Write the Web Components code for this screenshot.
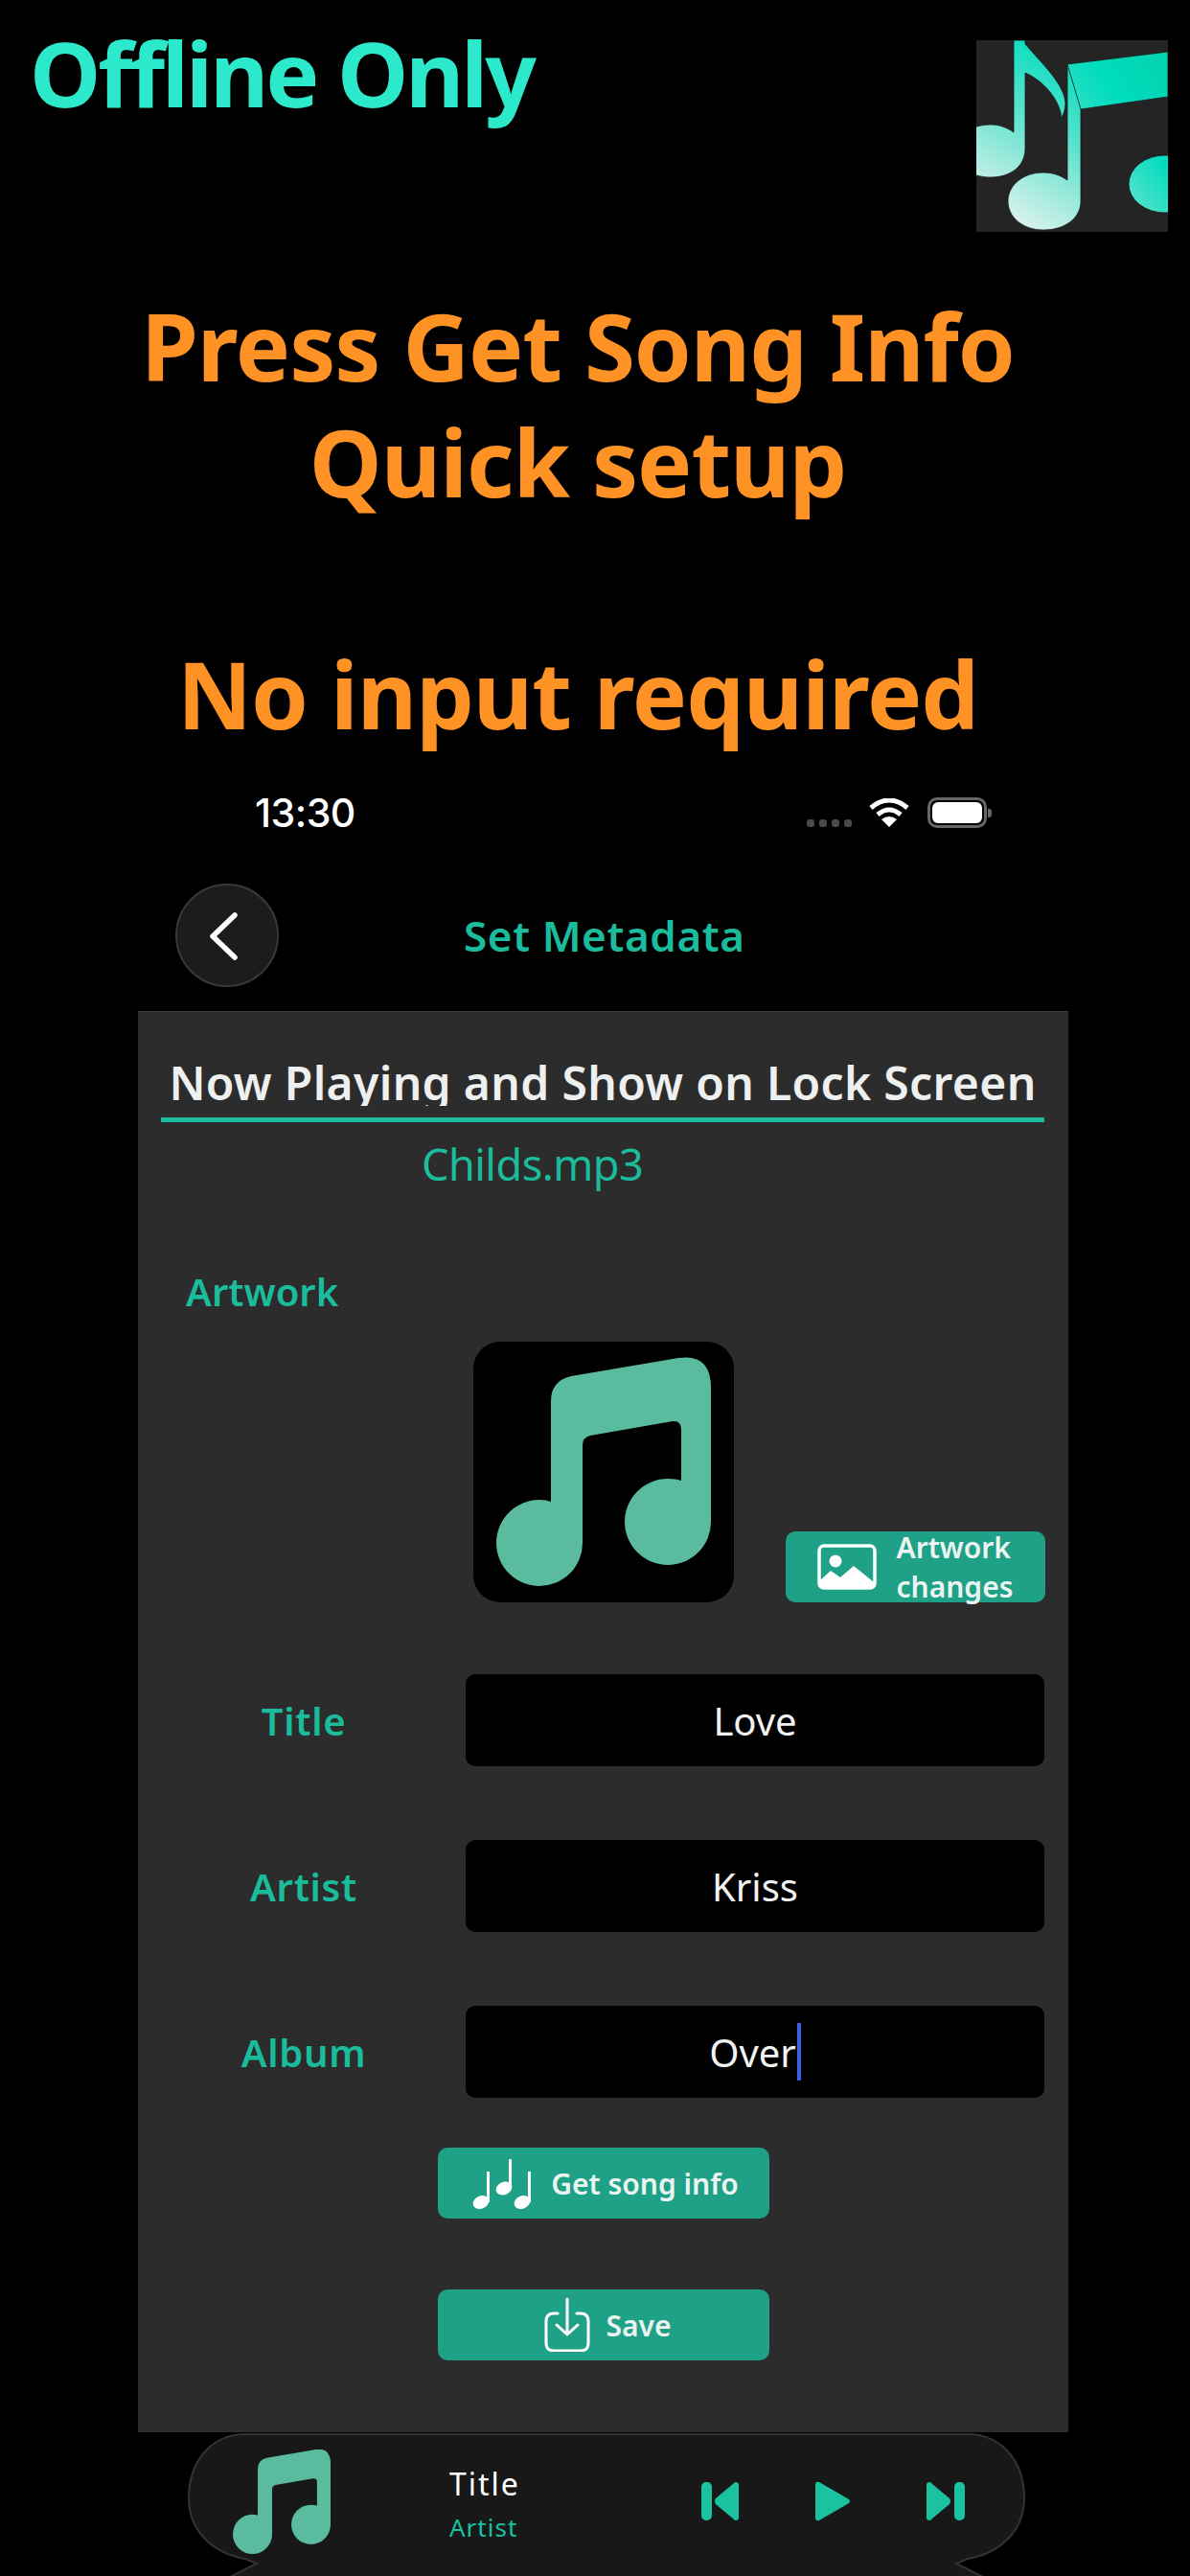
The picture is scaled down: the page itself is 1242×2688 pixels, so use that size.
<!DOCTYPE html>
<html>
<head>
<meta charset="utf-8">
<title>Set Metadata</title>
<style>
html, body { margin: 0; padding: 0; background: #000; }
body { width: 1242px; height: 2688px; overflow: hidden; font-family: "Noto Sans", Lato, sans-serif; }
</style>
</head>
<body>
<promo-header>
  <span slot="badge">Offline Only</span>
  <span>Press Get Song Info</span>
  <span>Quick setup</span>
  <span>&nbsp;</span>
  <span>No input required</span>
</promo-header>
<status-bar time="13:30"></status-bar>
<nav-bar>Set Metadata</nav-bar>
<metadata-panel>
  <span slot="heading">Now Playing and Show on Lock Screen</span>
  <span slot="file">Childs.mp3</span>
  <meta-field label="Title">Love</meta-field>
  <meta-field label="Artist">Kriss</meta-field>
  <meta-field label="Album" caret>Over</meta-field>
</metadata-panel>
<mini-player title-text="Title" artist="Artist"></mini-player>

<script>
const NOTE_PATH = 'M81 167V62Q81 41 102 36L214 17Q248 12 248 48V188A45 45 0 1 1 203 143Q212 143 217 145V92Q217 82 208 83L122 98Q114 100 114 108V210A45 45 0 1 1 69 165Q76 165 81 167Z';

const promoTemplate = document.createElement('template');
promoTemplate.innerHTML = `
<style>
:host { display: block; height: 784px; }
.top { display: flex; justify-content: space-between; align-items: flex-start; height: 300px; padding: 0 23px 0 31px; box-sizing: border-box; }
.badge { font-size: 94px; line-height: 100px; font-weight: 700; color: #2de9cb; margin-top: 26px; letter-spacing: -3px; }
.logo { display: block; width: 200px; height: 200px; margin-top: 42px; background: #242424; }
.lines { display: flex; flex-direction: column; align-items: center; width: 1206px; font-size: 96px; line-height: 121px; font-weight: 700; color: #ff9225; letter-spacing: -1px; }
::slotted(span) { display: block; }
</style>
<div class="top">
  <div class="badge"><slot name="badge"></slot></div>
  <svg class="logo" viewBox="0 0 200 200">
    <defs>
      <linearGradient id="g1" gradientUnits="userSpaceOnUse" x1="40" y1="200" x2="140" y2="40">
        <stop offset="0" stop-color="#e6f3f0"/><stop offset=".55" stop-color="#62e3cd"/><stop offset="1" stop-color="#00dcbe"/>
      </linearGradient>
      <linearGradient id="g2" gradientUnits="userSpaceOnUse" x1="90" y1="80" x2="200" y2="10">
        <stop offset="0" stop-color="#3ce0c6"/><stop offset=".45" stop-color="#00dcbe"/><stop offset="1" stop-color="#03d2ad"/>
      </linearGradient>
      <linearGradient id="g3" gradientUnits="userSpaceOnUse" x1="150" y1="170" x2="200" y2="130">
        <stop offset="0" stop-color="#62e3cd"/><stop offset="1" stop-color="#00dcbe"/>
      </linearGradient>
    </defs>
    <g stroke="#1a1a1a" stroke-width=".8">
      <path fill="url(#g1)" d="M39 0H51V4C70 26 92 46 93 66C93 72 91 77 89 81C87 62 70 42 51 34V113C51 132 35 143 15 143C-8 143 -22 130 -22 115C-22 100 -6 88 15 88C24 88 32 91 39 96Z"/>
      <path fill="url(#g1)" d="M95 25H109V168C109 186 92 198 70 198C49 198 33 185 33 168C33 151 49 138 70 138C80 138 88 141 95 146Z"/>
      <path fill="url(#g2)" d="M95 25L200 12V59L109 72Z"/>
      <ellipse fill="url(#g3)" cx="197" cy="150" rx="38" ry="30"/>
    </g>
  </svg>
</div>
<div class="lines"><slot></slot></div>
`;
class PromoHeader extends HTMLElement {
  constructor() {
    super();
    this.attachShadow({ mode: 'open' });
    this.shadowRoot.appendChild(promoTemplate.content.cloneNode(true));
  }
}
customElements.define('promo-header', PromoHeader);

const statusTemplate = document.createElement('template');
statusTemplate.innerHTML = `
<style>
:host { display: flex; align-items: center; justify-content: space-between; height: 128px; padding: 0 207px 0 266px; box-sizing: border-box; color: #fff; }
.time { font-family: Inter, "Liberation Sans", sans-serif; font-size: 41px; font-weight: 500; letter-spacing: -.5px; }
.icons { display: flex; align-items: center; }
.dots { display: flex; gap: 5px; margin: 22px 18px 0 0; }
.dots i { display: block; width: 8px; height: 8px; border-radius: 3px; background: #4a4a4a; }
.wifi { display: block; width: 42px; height: 30px; margin-right: 19px; }
.battery { width: 62px; height: 32px; border: 3px solid #666; border-radius: 10px; box-sizing: border-box; padding: 2px; position: relative; }
.battery i { display: block; height: 100%; background: #fff; border-radius: 6px; }
.nub { width: 4px; height: 9px; background: #666; border-radius: 0 3px 3px 0; margin-left: 1px; }
</style>
<span class="time"></span>
<div class="icons">
  <div class="dots"><i></i><i></i><i></i><i></i></div>
  <svg class="wifi" viewBox="0 0 42 30" fill="none" stroke="#fff" stroke-width="5">
    <path d="M2 10Q21 -6 40 10"/>
    <path d="M9 17Q21 7 33 17"/>
    <path fill="#fff" stroke="none" d="M21 30L13 22Q21 16 29 22Z"/>
  </svg>
  <div class="battery"><i></i></div>
  <div class="nub"></div>
</div>
`;
class StatusBar extends HTMLElement {
  constructor() {
    super();
    this.attachShadow({ mode: 'open' });
    this.shadowRoot.appendChild(statusTemplate.content.cloneNode(true));
    this.shadowRoot.querySelector('.time').textContent = this.getAttribute('time');
  }
}
customElements.define('status-bar', StatusBar);

const navTemplate = document.createElement('template');
navTemplate.innerHTML = `
<style>
:host { display: flex; align-items: center; gap: 193px; height: 143px; padding: 0 0 15px 183px; box-sizing: border-box; }
.back { display: flex; width: 108px; height: 108px; border-radius: 50%; background: #1c1c1c; border: 2px solid #383838; box-sizing: border-box; }
.back svg { width: 104px; height: 104px; }
.title { font-size: 44px; font-weight: 600; color: #1abc9c; letter-spacing: .6px; }
</style>
<div class="back">
  <svg viewBox="0 0 104 104" fill="none" stroke="#fff" stroke-width="5.5" stroke-linecap="round" stroke-linejoin="round"><path d="M60 31L37 53L60 75"/></svg>
</div>
<div class="title"><slot></slot></div>
`;
class NavBar extends HTMLElement {
  constructor() {
    super();
    this.attachShadow({ mode: 'open' });
    this.shadowRoot.appendChild(navTemplate.content.cloneNode(true));
  }
}
customElements.define('nav-bar', NavBar);

const fieldTemplate = document.createElement('template');
fieldTemplate.innerHTML = `
<style>
:host { display: flex; align-items: center; height: 96px; margin-right: 25px; }
.label { width: 342px; padding-left: 4px; box-sizing: border-box; text-align: center; font-size: 40px; font-weight: 600; color: #1abc9c; letter-spacing: .7px; }
.input { width: 604px; height: 96px; border-radius: 10px; background: #000; color: #f2f2f2; display: flex; align-items: center; justify-content: center; font-size: 40px; }
.caret { display: none; width: 4px; height: 60px; margin-left: 1px; background: #3d5fe0; }
:host([caret]) .caret { display: block; }
</style>
<div class="label"></div>
<div class="input"><slot></slot><span class="caret"></span></div>
`;
class MetaField extends HTMLElement {
  constructor() {
    super();
    this.attachShadow({ mode: 'open' });
    this.shadowRoot.appendChild(fieldTemplate.content.cloneNode(true));
    this.shadowRoot.querySelector('.label').textContent = this.getAttribute('label');
  }
}
customElements.define('meta-field', MetaField);

const buttonTemplate = document.createElement('template');
buttonTemplate.innerHTML = `
<style>
:host { display: flex; align-items: center; justify-content: center; gap: 20px; height: 74px; border-radius: 10px; background: #1fa187; color: #ecf4f1; font-size: 30px; font-weight: 600; box-sizing: border-box; }
::slotted(svg) { display: block; flex: none; }
</style>
<slot></slot>
`;
class ActionButton extends HTMLElement {
  constructor() {
    super();
    this.attachShadow({ mode: 'open' });
    this.shadowRoot.appendChild(buttonTemplate.content.cloneNode(true));
  }
}
customElements.define('action-button', ActionButton);

const panelTemplate = document.createElement('template');
panelTemplate.innerHTML = `
<style>
:host { display: block; width: 971px; height: 1483px; margin-left: 144px; padding-top: 44px; box-sizing: border-box; background: #2c2c2c; border-top: 1px solid #3a3a3a; }
.heading { margin: 0 25px 0 24px; padding-bottom: 12px; border-bottom: 5px solid #1abc9c; }
.heading div { height: 54px; line-height: 60px; overflow: hidden; text-align: center; font-size: 48px; font-weight: 600; color: #eef0f0; white-space: nowrap; letter-spacing: .35px; }
.file { margin-left: 296px; height: 88px; line-height: 88px; font-size: 45px; color: #1abc9c; letter-spacing: -.5px; }
.art-label { margin: 59px 0 0 50px; height: 60px; line-height: 60px; font-size: 40px; font-weight: 600; color: #1abc9c; }
.art-row { display: flex; align-items: flex-end; gap: 54px; margin: 22px 0 75px 350px; }
.tile { display: block; width: 272px; height: 272px; border-radius: 28px; background: #000; }
.change { width: 271px; gap: 20px; line-height: 41px; }
.change span { display: block; text-align: left; }
.fields { display: flex; flex-direction: column; gap: 77px; }
.buttons { display: flex; flex-direction: column; align-items: center; gap: 74px; margin-top: 52px; }
.buttons action-button { width: 346px; }
.get { padding-left: 5px; }
.save { padding-left: 10px; gap: 16px; }
</style>
<div class="heading"><div><slot name="heading"></slot></div></div>
<div class="file"><slot name="file"></slot></div>
<div class="art-label">Artwork</div>
<div class="art-row">
  <svg class="tile" viewBox="0 0 272 272"><path fill="#5abb9f" d="${NOTE_PATH}"/></svg>
  <action-button class="change">
    <svg width="62" height="48" viewBox="0 0 62 48">
      <rect x="2" y="2" width="58" height="44" rx="5" fill="none" stroke="#fff" stroke-width="3.5"/>
      <ellipse cx="19" cy="18" rx="6.5" ry="6.5" fill="#fff"/>
      <path fill="#fff" d="M3 38L14 28L24 35L38 23L59 40V42Q59 46 55 46H7Q3 46 3 42Z"/>
    </svg>
    <span>Artwork<br>changes</span>
  </action-button>
</div>
<div class="fields"><slot></slot></div>
<div class="buttons">
  <action-button class="get">
    <svg width="62" height="53" viewBox="0 0 62 53" fill="#fff">
      <ellipse cx="9" cy="46" rx="8.6" ry="6.6" transform="rotate(-25 9 46)"/><rect x="15" y="14" width="3" height="32"/>
      <ellipse cx="33" cy="31.5" rx="8.6" ry="6.6" transform="rotate(-25 33 31.5)"/><rect x="38" y="1" width="3" height="31"/>
      <ellipse cx="52" cy="46" rx="8.6" ry="6.6" transform="rotate(-25 52 46)"/><rect x="58" y="14" width="3" height="32"/>
    </svg>
    <span>Get song info</span>
  </action-button>
  <action-button class="save">
    <svg width="48" height="56" viewBox="0 0 48 56" fill="none" stroke="#fff" stroke-width="3" stroke-linecap="round" stroke-linejoin="round">
      <path d="M14 16H10Q2 16 2 24V47Q2 55 10 55H38Q46 55 46 47V24Q46 16 38 16H34"/>
      <path d="M24 1V38M13 28L24 38L35 28"/>
    </svg>
    <span>Save</span>
  </action-button>
</div>
`;
class MetadataPanel extends HTMLElement {
  constructor() {
    super();
    this.attachShadow({ mode: 'open' });
    this.shadowRoot.appendChild(panelTemplate.content.cloneNode(true));
  }
}
customElements.define('metadata-panel', MetadataPanel);

const playerTemplate = document.createElement('template');
playerTemplate.innerHTML = `
<style>
:host { display: flex; align-items: flex-start; position: relative; width: 874px; height: 149px; margin: 1px 0 0 196px; box-sizing: border-box; padding: 17px 0 0 47px; }
.shape { position: absolute; left: 0; top: 0; width: 874px; height: 149px; }
.note, .text, .controls { position: relative; }
.note { display: block; width: 102px; height: 109px; flex: none; }
.text { width: 76px; margin: 16px 0 0 124px; display: flex; flex-direction: column; align-items: flex-start; }
.title { font-size: 32px; line-height: 40px; color: #fff; letter-spacing: 2px; }
.artist { font-size: 26px; line-height: 32px; margin-top: 9px; color: #14c2a0; letter-spacing: 1px; }
.controls { display: flex; align-items: center; gap: 79px; margin: 33px 0 0 187px; }
.controls svg { display: block; fill: #1bc2a0; }
</style>
<svg class="shape" viewBox="0 0 874 149">
  <path fill="#181818" stroke="#333" stroke-width="2" d="M60 1H814C850 1 873 30 873 68C873 100 850 125 814 131L802 136L834 152H40L72 136L60 131C24 125 1 100 1 68C1 30 24 1 60 1Z"/>
</svg>
<svg class="note" viewBox="24 17 224 238" preserveAspectRatio="none"><path fill="#5abb9f" d="${NOTE_PATH}"/></svg>
<div class="text"><span class="title"></span><span class="artist"></span></div>
<div class="controls">
  <svg width="39" height="40" viewBox="0 0 39 40"><rect x="0" y="0" width="11" height="40" rx="5"/><path d="M36 0Q39 0 39 3V37Q39 40 36 40Q34 40 33 38L15 23Q13 20 15 17L33 2Q34 0 36 0Z"/></svg>
  <svg width="38" height="42" viewBox="0 0 38 42"><path d="M5 1L36 19Q38 21 36 23L5 41Q1 42 1 38V4Q1 0 5 1Z"/></svg>
  <svg width="40" height="40" viewBox="0 0 40 40"><rect x="29" y="0" width="11" height="40" rx="5"/><path d="M3 0Q0 0 0 3V37Q0 40 3 40Q5 40 6 38L24 23Q26 20 24 17L6 2Q5 0 3 0Z"/></svg>
</div>
`;
class MiniPlayer extends HTMLElement {
  constructor() {
    super();
    this.attachShadow({ mode: 'open' });
    this.shadowRoot.appendChild(playerTemplate.content.cloneNode(true));
    this.shadowRoot.querySelector('.title').textContent = this.getAttribute('title-text');
    this.shadowRoot.querySelector('.artist').textContent = this.getAttribute('artist');
  }
}
customElements.define('mini-player', MiniPlayer);
</script>
</body>
</html>
